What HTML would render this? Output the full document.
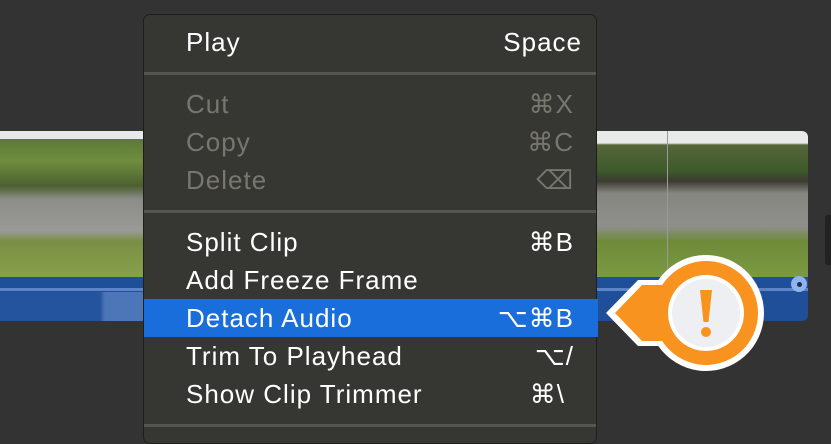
<!DOCTYPE html>
<html><head><style>
body{margin:0;width:831px;height:427px;overflow:hidden;background:#333333;position:relative;font-family:"Liberation Sans","DejaVu Sans",sans-serif}
.abs{position:absolute}
.vid{top:131px;height:146px;overflow:hidden}
.aud{top:277px;height:44px;background:#1f4f99}
.menu{left:143px;top:14px;width:454px;height:430px;background:#363633;border-radius:7px;border:1px solid #1e1e1e;box-sizing:border-box}
.row{position:absolute;left:0;width:454px;height:38px;line-height:38px;font-size:26px;letter-spacing:1px;color:#fff}
.row .l{position:absolute;left:42px}
.row .r{position:absolute;right:24px}
.dis{color:#77776f}
.sep{position:absolute;left:0;width:452px;height:3px;background:#555553}
</style></head><body>
<div class="abs vid" style="left:0;width:143px;background:linear-gradient(180deg,#e6e9ea 0,#e6e9ea 8px,#5d7a36 8px,#6f8d3e 30px,#4c6030 55px,#8c8c88 68px,#9a9a97 100px,#7a8e44 110px,#87a14a 146px)"></div>
<div class="abs aud" style="left:0;width:143px"></div>
<div class="abs" style="left:0;top:288px;width:143px;height:3px;background:#5b85c8"></div>
<div class="abs" style="left:0;top:292px;width:143px;height:29px;background:linear-gradient(90deg,#24549e 0,#24549e 100px,#4d76b9 105px,#4d76b9 143px)"></div>
<div class="abs vid" style="left:597px;width:211px;border-radius:0 6px 0 0;background:linear-gradient(180deg,#e8eaea 0,#e8eaea 12px,#55663a 14px,#3e5a2a 40px,#3a3a30 50px,#858580 62px,#8f8f8c 95px,#6f8a3a 110px,#7b9a40 146px)"></div>
<div class="abs" style="left:667px;top:131px;width:1px;height:146px;background:#999"></div>
<div class="abs aud" style="left:597px;width:211px;border-radius:0 0 6px 0"></div>
<div class="abs" style="left:597px;top:288px;width:211px;height:3px;background:#5b85c8"></div>
<div class="abs" style="left:791px;top:276px;width:16px;height:16px;border-radius:50%;background:#8fb3ee"></div>
<div class="abs" style="left:797px;top:282px;width:5px;height:5px;border-radius:50%;background:#1f2f50"></div>
<svg class="abs" style="left:600px;top:250px" width="170" height="140" viewBox="0 0 170 140">
<path d="M6 63 L38 30 L58.3 30 A58 58 0 1 1 58.3 96 L38 96 Z" fill="#fff"/>
<path d="M15 63 L42 35 L62.2 35 A52 52 0 1 1 62.2 91 L42 91 Z" fill="#f7931e"/>
<circle cx="106" cy="63" r="38" fill="#fff"/>
<circle cx="106" cy="63" r="34" fill="#eeeff2"/>
<path d="M100 40 L112 40 L108.5 72 L103.5 72 Z" fill="#f7931e"/>
<circle cx="106" cy="82" r="5" fill="#f7931e"/>
</svg>
<div class="abs menu">
<div class="row" style="top:8px"><span class="l">Play</span><span class="r" style="right:16px">Space</span></div>
<div class="sep" style="top:57px"></div>
<div class="row dis" style="top:70px"><span class="l">Cut</span><span class="r">⌘X</span></div>
<div class="row dis" style="top:108px"><span class="l">Copy</span><span class="r">⌘C</span></div>
<div class="row dis" style="top:146px"><span class="l">Delete</span><span class="r">⌫</span></div>
<div class="sep" style="top:195px"></div>
<div class="row" style="top:208px"><span class="l">Split Clip</span><span class="r">⌘B</span></div>
<div class="row" style="top:246px"><span class="l">Add Freeze Frame</span></div>
<div class="row" style="top:284px;background:#1a6edb"><span class="l">Detach Audio</span><span class="r">⌥⌘B</span></div>
<div class="row" style="top:322px"><span class="l">Trim To Playhead</span><span class="r">⌥/</span></div>
<div class="row" style="top:360px"><span class="l">Show Clip Trimmer</span><span class="r" style="right:33px">⌘\</span></div>
<div class="sep" style="top:409px"></div>
</div>
<div class="abs" style="left:825px;top:215px;width:6px;height:50px;background:#222;border-radius:3px 0 0 3px"></div>
</body></html>
